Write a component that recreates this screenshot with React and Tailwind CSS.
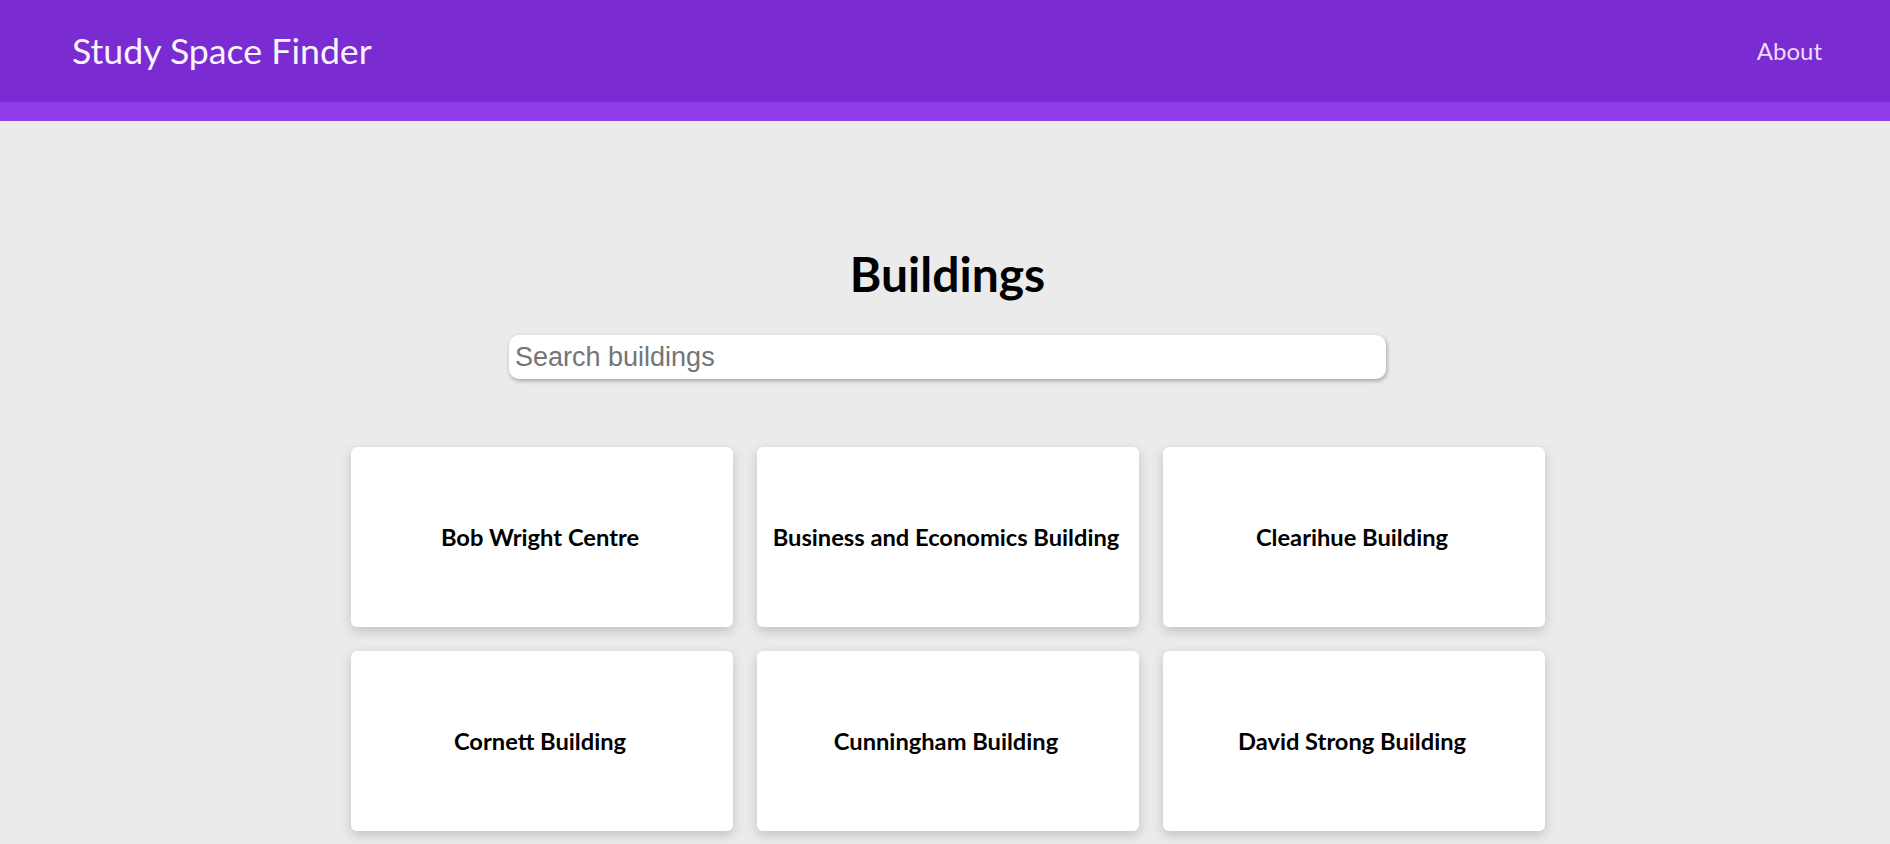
import React, { useState } from 'react';

const buildings = [
  'Bob Wright Centre',
  'Business and Economics Building',
  'Clearihue Building',
  'Cornett Building',
  'Cunningham Building',
  'David Strong Building',
  'Elliott Building',
  'Engineering Lab Wing',
  'Fraser Building',
];

const App = () => {
  const [query, setQuery] = useState('');
  const shown = buildings.filter(b => b.toLowerCase().includes(query.toLowerCase()));

  return (
    <div className="min-h-screen bg-[#ebebeb] font-['Lato','Open_Sans',sans-serif]">
      <header>
        <div className="h-[102px] bg-[#7b2bd2] flex items-center justify-between pl-[72px] pr-[68px]">
          <span className="text-[35.7px] text-[#f8f4ff]">Study Space Finder</span>
          <a href="#" className="text-[24px] text-[#ecdcfc]">About</a>
        </div>
        <div className="h-[19px] bg-[#8f3be8]"></div>
      </header>

      <main className="flex flex-col items-center pl-[5px]">
        <h1 className="mt-[129px] text-[48px] leading-none font-bold text-black">Buildings</h1>
        <input
          type="text"
          value={query}
          onChange={(e) => setQuery(e.target.value)}
          placeholder="Search buildings"
          className="mt-[37px] w-[877px] h-[44px] bg-white rounded-[10px] px-[6px] text-[27px] font-['Liberation_Sans',Arial,sans-serif] text-black placeholder-[#757575] outline-none shadow-[1px_2px_4px_rgba(0,0,0,0.3)]"
        />

        <div className="mt-[68px] mb-10 ml-[1px] grid grid-cols-3 gap-6">
          {shown.map((name) => (
            <div
              key={name}
              className="w-[382px] h-[180px] bg-white rounded-md flex items-center justify-center pt-[2px] pr-[4px] shadow-[0_4px_12px_rgba(0,0,0,0.18)]"
            >
              <span className="text-[23.7px] font-bold text-black">{name}</span>
            </div>
          ))}
        </div>
      </main>
    </div>
  );
};

export default App;
